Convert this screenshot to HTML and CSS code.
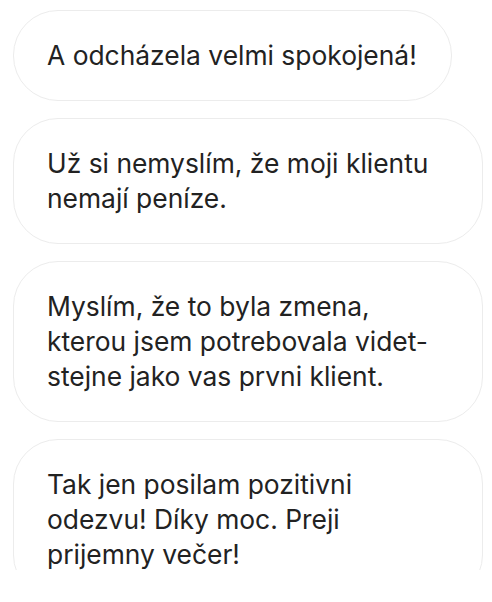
FILE: index.html
```html
<!DOCTYPE html>
<html lang="cs">
<head>
<meta charset="utf-8">
<link rel="stylesheet" href="styles.css">
</head>
<body>
<div class="thread">
  <div class="bubble">A odcházela velmi spokojená!</div>
  <div class="bubble bubble-wide">Už si nemyslím, že moji klientu<br>nemají peníze.</div>
  <div class="bubble bubble-wide">Myslím, že to byla zmena,<br>kterou jsem potrebovala videt-<br>stejne jako vas prvni klient.</div>
  <div class="bubble bubble-wide">Tak jen posilam pozitivni<br>odezvu! Díky moc. Preji<br>prijemny večer!</div>
</div>
</body>
</html>
```
FILE: styles.css
```css
html, body {
  margin: 0;
  padding: 0;
  background: #ffffff;
}
body {
  font-family: Inter, "Noto Sans", sans-serif;
  color: #222222;
}
.thread {
  height: 570px;
  overflow: hidden;
  padding: 10px 9px 0 13px;
  box-sizing: border-box;
  display: flex;
  flex-direction: column;
  align-items: flex-start;
  gap: 17px;
}
.bubble {
  max-width: 470px;
  box-sizing: border-box;
  border: 1px solid #ececec;
  border-radius: 45px;
  padding: 27px 34px 27px 33px;
  font-size: 26.4px;
  line-height: 35px;
  white-space: nowrap;
  flex-shrink: 0;
}
.bubble-wide {
  width: 470px;
}
```
